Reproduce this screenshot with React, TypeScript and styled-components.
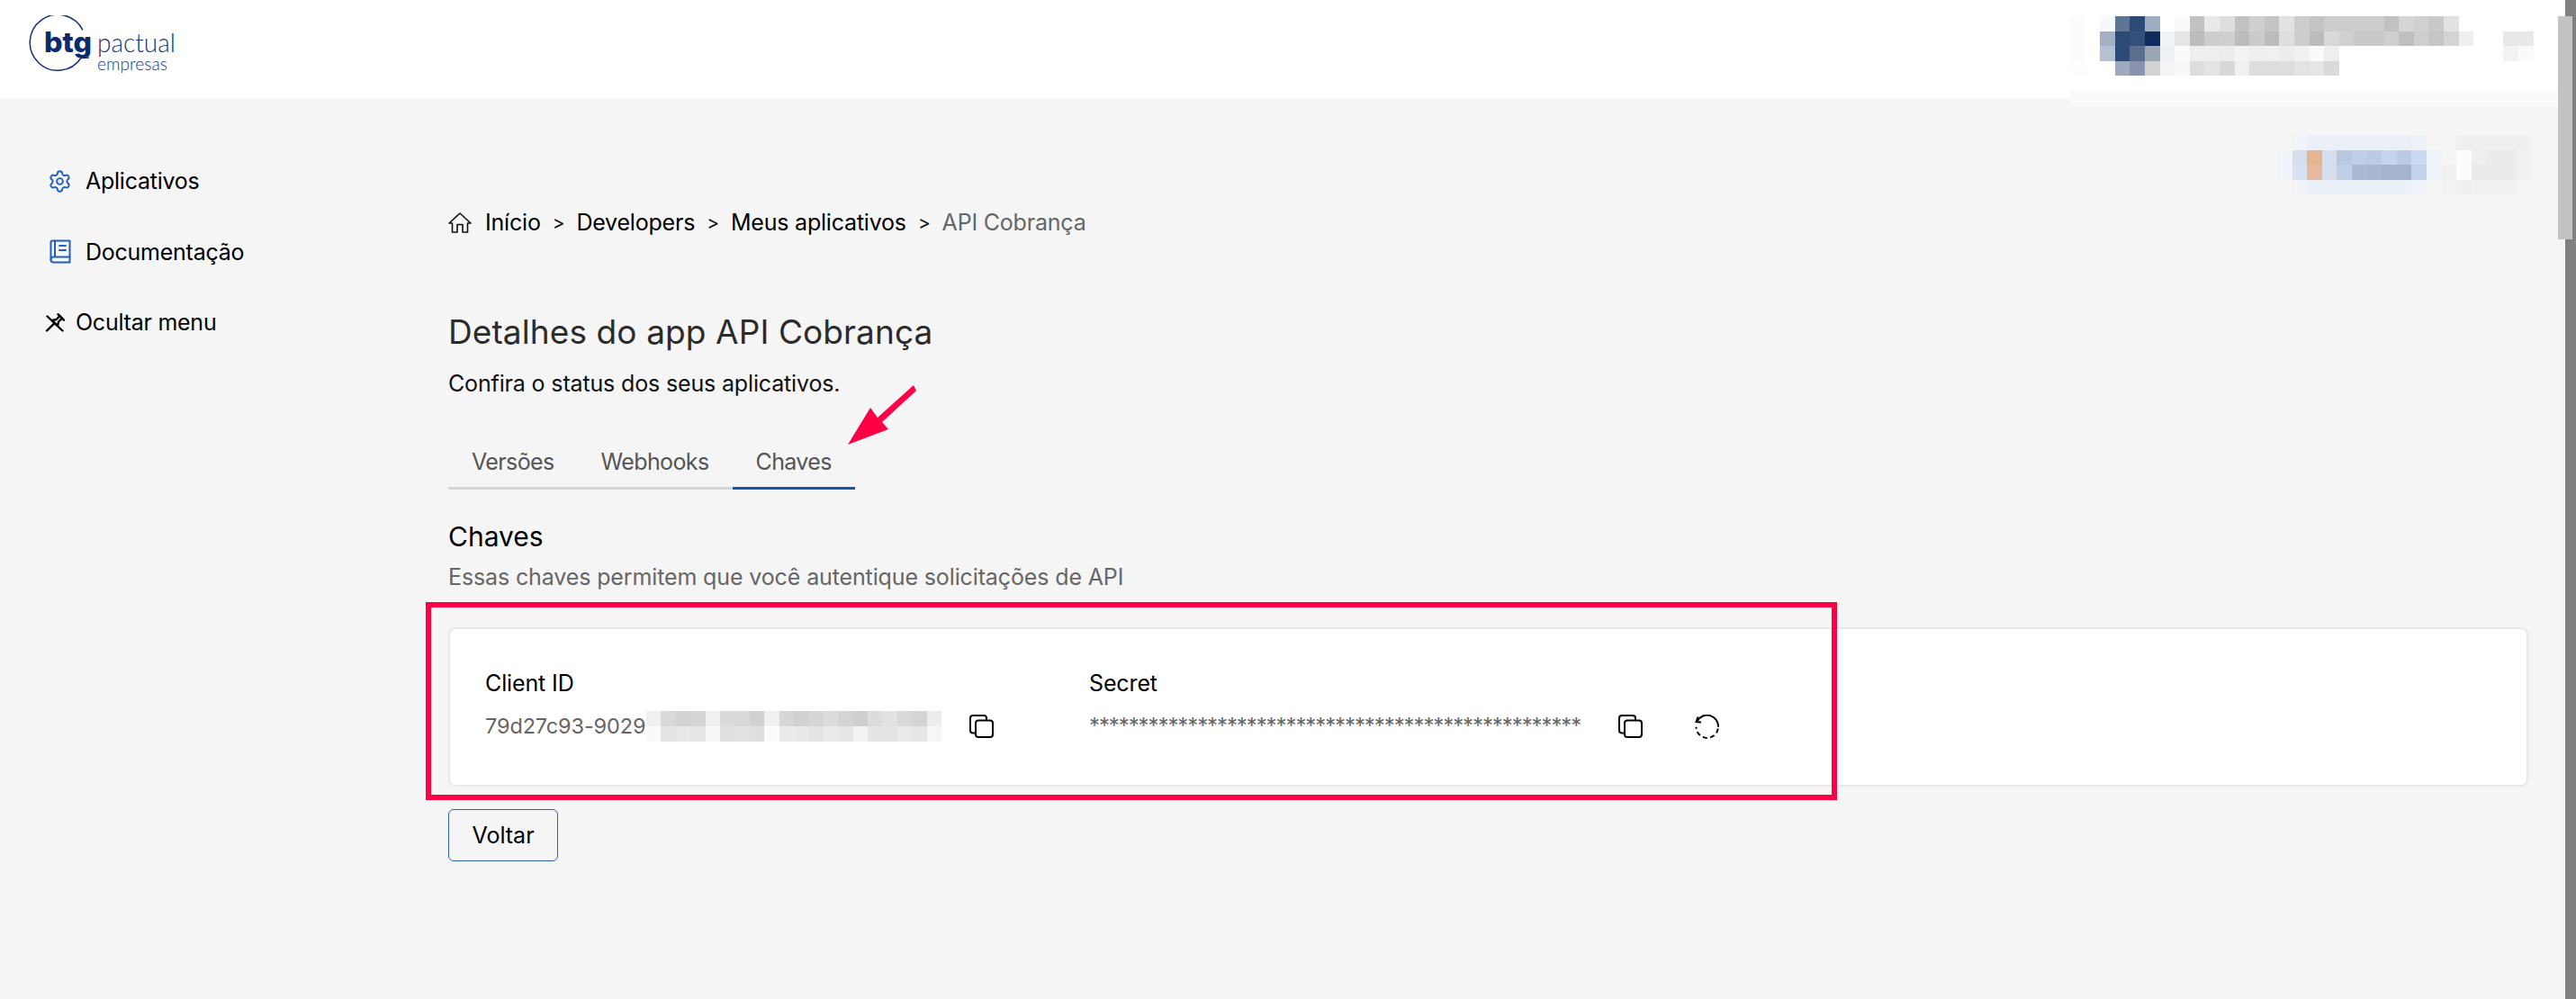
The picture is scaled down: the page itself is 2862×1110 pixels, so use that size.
import React from "react";
import styled, { createGlobalStyle } from "styled-components";
import { Settings } from "lucide-react";

const USER_ROWS = [
    ["#fcfcfc", "#fff", "#f6f8fa", "#5f7594", "#2c4a75", "#9dacc1", "#fff", "#fafafa", "#c2c2c2", "#e9e9e9", "#dedede", "#c2c2c2", "#cfcfcf", "#c4c4c4", "#e2e2e2", "#cdcdcd", "#c4c4c4", "#cdcdcd", "#cdcdcd", "#cdcdcd", "#cdcdcd", "#c2c2c2", "#d6d6d6", "#d0d0d0", "#c9c9c9", "#e2e2e2"],
    ["#fcfcfc", "#fff", "#a3afc2", "#2c4a75", "#34507a", "#0e2b5c", "#f0f2f6", "#e5e5e5", "#bcbcbc", "#cdcdcd", "#cfcfcf", "#bcbcbc", "#cbcbcb", "#bcbcbc", "#dedede", "#cdcdcd", "#bcbcbc", "#d9d9d9", "#d0d0d0", "#c9c9c9", "#c9c9c9", "#cfcfcf", "#bfbfbf", "#cecece", "#c6c6c6", "#d4d4d4", "#efefef", "#fff", "#fff", "#e8e8e8", "#e8e8e8"],
    ["#fcfcfc", "#fff", "#b5c0d0", "#2c4a75", "#5a6f8e", "#9ca5b3", "#eff1f4", "#fafafa", "#eeeeee", "#eeeeee", "#ececec", "#f3f3f3", "#eeeeee", "#f0f0f0", "#ececec", "#f1f1f1", "#fafafa", "#eeeeee", "#fff", "#fff", "#fff", "#fff", "#fff", "#fff", "#fff", "#fff", "#fff", "#fff", "#fff", "#f3f3f3", "#fafafa"],
    ["#fdfdfd", "#fff", "#fff", "#9daabe", "#8894ad", "#d3d3d3", "#f5f5f5", "#f8f8f8", "#dddddd", "#e4e4e4", "#d8d8d8", "#f0f0f0", "#dddddd", "#dddddd", "#dddddd", "#e3e3e3", "#e5e5e5", "#dadada"],
];

const ACCOUNT_ROWS = [
    ["#f5f5f5", "#f0f3f9", "#ebeff8", "#ebeff8", "#ebeff8", "#ebeff8", "#ebeff8", "#ebeff8", "#ebeff8", "#eef2f8", "#f5f5f5", "#f4f4f4", "#efefef", "#efefef", "#efefef", "#efefef", "#efefef"],
    ["#f1f3fa", "#d6deee", "#e4b592", "#d6deee", "#b7c8df", "#bfcfe7", "#bbcbe3", "#c6d5ee", "#bbcbe3", "#c9daf2", "#eff3f8", "#f5f5f5", "#fcfcfc", "#eeeeee", "#ebebeb", "#ebebeb", "#f0f0f0"],
    ["#f1f3fa", "#d6e0f0", "#e3b9a0", "#d6deee", "#bfcfe7", "#aabad3", "#a8b8d0", "#a4b4cc", "#a4b4cc", "#c2d2ea", "#eff3f8", "#f0f0f0", "#fcfcfc", "#ebebeb", "#ebebeb", "#ebebeb", "#f0f0f0"],
    ["#f5f5f5", "#f2f3f8", "#e9f0f8", "#e9f0f8", "#e9f0f8", "#e9f0f8", "#e9f0f8", "#e9f0f8", "#e9f0f8", "#f0f3f8", "#f5f5f5", "#f3f3f3", "#efefef", "#f1f1f1", "#f1f1f1", "#f1f1f1", "#f4f4f4"],
];

const CLIENT_ID_ROWS = [
    ["#f0f0f0", "#d9d9d9", "#d2d2d2", "#d6d6d6", "#f0f0f0", "#dadada", "#d9d9d9", "#d1d1d1", "#f0f0f0", "#d6d6d6", "#d1d1d1", "#d6d6d6", "#dcdcdc", "#d4d4d4", "#cfcfcf", "#dcdcdc", "#e2e2e2", "#d9d9d9", "#d4d4d4", "#ececec"],
    ["#fafafa", "#e3e3e3", "#e8e8e8", "#e6e6e6", "#f8f8f8", "#e0e0e0", "#e2e2e2", "#dedede", "#fcfcfc", "#ebebeb", "#e8e8e8", "#e4e4e4", "#ebebeb", "#e6e6e6", "#f2f2f2", "#e4e4e4", "#e4e4e4", "#ebebeb", "#e6e6e6", "#f6f6f6"],
];

// blurred-out pieces of the screenshot
const Mosaic: React.FC<{ rows: string[][]; cellW: number; cellH: number }> = ({ rows, cellW, cellH }) => {
    const cols = Math.max(...rows.map((row) => row.length));
    return (
        <svg width={cols * cellW} height={rows.length * cellH} shapeRendering="crispEdges" style={{ display: "block", flexShrink: 0 }}>
            {rows.map((row, y) =>
                row.map((color, x) => (
                    <rect key={`${x}-${y}`} x={x * cellW} y={y * cellH} width={cellW + 0.5} height={cellH + 0.5} fill={color} />
                ))
            )}
        </svg>
    );
};

const Logo = () => (
    <svg width="180" height="70" viewBox="0 0 180 70" style={{ display: "block" }}>
        <path d="M61 16.5 A 31 31 0 1 0 59 47.5 L 68 47" fill="none" stroke="#15307a" strokeWidth="1.5" />
        <text x="18" y="41" fontFamily="Inter, sans-serif" fontWeight="800" fontSize="31" fill="#0e2a6e" textLength="53" lengthAdjust="spacingAndGlyphs">btg</text>
        <text x="77" y="41" fontFamily="Lato, sans-serif" fontWeight="300" fontSize="29" fill="#1c3778" textLength="87" lengthAdjust="spacingAndGlyphs">pactual</text>
        <text x="77" y="61" fontFamily="Lato, sans-serif" fontWeight="300" fontSize="19" fill="#1c3778" textLength="78" lengthAdjust="spacingAndGlyphs">empresas</text>
    </svg>
);

const BookIcon = () => (
    <svg width="24" height="27" viewBox="0 0 24 27" fill="none" stroke="#1f5fbf" strokeWidth="2" strokeLinejoin="round" strokeLinecap="round">
        <path d="M3 1.5H22.5V25.5H4.5A3 3 0 0 1 1.5 22.5V3A1.5 1.5 0 0 1 3 1.5Z" />
        <path d="M6 1.5V19.5M1.5 22.5A3 3 0 0 1 4.5 19.5H22.5" />
        <path d="M11 7H18M11 12H18" />
    </svg>
);

const PinOffIcon = () => (
    <svg width="22" height="21" viewBox="0 0 22 21" fill="none" stroke="#000" strokeWidth="2.4" strokeLinejoin="round" strokeLinecap="round">
        <path d="M14.5 1.2L21 7.7" />
        <path d="M16.5 3.2L12.5 7L8 8L14 14L15 9.5L19 5.7" />
        <path d="M10.5 11.2L2 19.5" />
        <path d="M2.5 3.5L19.5 19.5" />
    </svg>
);

const HomeIcon = () => (
    <svg width="26" height="23" viewBox="0 0 26 23" fill="none" stroke="#111" strokeWidth="1.6" strokeLinejoin="round">
        <path d="M1 12L13 1L25 12H21.5V22H16V13.5H10V22H4.5V12Z" />
    </svg>
);

const CopyIcon = () => (
    <svg width="27" height="26" viewBox="0 0 27 26" fill="none" stroke="#000" strokeWidth="2">
        <rect x="7" y="6.5" width="19" height="18.5" rx="3" />
        <path d="M7 20.5H4A3 3 0 0 1 1 17.5V4A3 3 0 0 1 4 1H16A3 3 0 0 1 19 4V6.5" />
    </svg>
);

const ResetIcon = () => (
    <svg width="28" height="27" viewBox="0 0 28 27" fill="none" stroke="#000" strokeWidth="2">
        <path d="M3 7A12.2 12.2 0 0 1 25.9 13.7" />
        <path d="M25.9 13.7A12.2 12.2 0 0 1 1.5 13.7" strokeDasharray="5 3.5" strokeDashoffset="-2" />
        <path d="M3.5 2.5L1.5 8L7 8.5" />
    </svg>
);

const Arrow = () => (
    <ArrowSvg width="80" height="70" viewBox="0 0 80 70">
        <polygon points="1,67 26,26 34,37 74,1 77,7 39,42 46,50" fill="#fe0045" />
    </ArrowSvg>
);

const App: React.FC = () => {
    return (
        <Page>
            <GlobalStyle />
            <Header>
                <Logo />
            </Header>

            <Body>
                <Sidebar>
                    <NavItem>
                        <NavIcon><Settings size={27} color="#1f5fbf" strokeWidth={1.7} /></NavIcon>
                        Aplicativos
                    </NavItem>
                    <NavItem>
                        <NavIcon><BookIcon /></NavIcon>
                        Documentação
                    </NavItem>
                    <NavItem $tight>
                        <PinOffIcon />
                        Ocultar menu
                    </NavItem>
                </Sidebar>

                <Main>
                    <AccountRow>
                        <Mosaic rows={ACCOUNT_ROWS} cellW={16.6} cellH={16.5} />
                    </AccountRow>

                    <Breadcrumb>
                        <HomeIcon />
                        <Crumb>Início</Crumb>
                        <Separator>&gt;</Separator>
                        <Crumb>Developers</Crumb>
                        <Separator>&gt;</Separator>
                        <Crumb>Meus aplicativos</Crumb>
                        <Separator>&gt;</Separator>
                        <Crumb $current>API Cobrança</Crumb>
                    </Breadcrumb>

                    <Title>Detalhes do app API Cobrança</Title>
                    <Subtitle>Confira o status dos seus aplicativos.</Subtitle>

                    <Tabs>
                        <Tab>Versões</Tab>
                        <Tab>Webhooks</Tab>
                        <Tab $active>Chaves</Tab>
                    </Tabs>

                    <SectionTitle>Chaves</SectionTitle>
                    <SectionText>Essas chaves permitem que você autentique solicitações de API</SectionText>

                    <Card>
                        <Field>
                            <FieldLabel>Client ID</FieldLabel>
                            <ClientIdRow>
                                <FieldValue>79d27c93-9029</FieldValue>
                                <Mosaic rows={CLIENT_ID_ROWS} cellW={16.4} cellH={17} />
                                <IconButton><CopyIcon /></IconButton>
                            </ClientIdRow>
                        </Field>
                        <Field>
                            <FieldLabel>Secret</FieldLabel>
                            <SecretRow>
                                <SecretValue>**************************************************</SecretValue>
                                <IconButton><CopyIcon /></IconButton>
                                <IconButton><ResetIcon /></IconButton>
                            </SecretRow>
                        </Field>
                    </Card>

                    <BackButton>Voltar</BackButton>
                </Main>
            </Body>

            <UserBlock>
                <Mosaic rows={USER_ROWS} cellW={16.6} cellH={16.5} />
                <UserFade />
            </UserBlock>

            <Highlight />
            <Arrow />

            <ScrollTrack>
                <ScrollThumb />
            </ScrollTrack>
        </Page>
    );
};

export default App;

const GlobalStyle = createGlobalStyle`
    html, body {
        margin: 0;
        padding: 0;
        background: #f5f5f5;
        overflow: hidden;
    }
    * {
        box-sizing: border-box;
    }
`;

const Page = styled.div`
    position: relative;
    width: 2862px;
    height: 1110px;
    overflow: hidden;
    background: #f5f5f5;
    font-family: Inter, "Liberation Sans", sans-serif;
    color: #000;
`;

const Header = styled.header`
    height: 110px;
    background: #fff;
    display: flex;
    align-items: flex-start;
    padding: 17px 0 0 31px;
`;

const Body = styled.div`
    display: flex;
`;

const Sidebar = styled.nav`
    width: 498px;
    flex-shrink: 0;
    display: flex;
    flex-direction: column;
    gap: 48.5px;
    padding-top: 76px;
`;

const NavItem = styled.div<{ $tight?: boolean }>`
    display: flex;
    align-items: center;
    height: 30px;
    font-size: 25px;
    letter-spacing: -0.01em;
    gap: ${(props) => (props.$tight ? "12px" : "15px")};
    padding-left: ${(props) => (props.$tight ? "50px" : "53px")};
`;

const NavIcon = styled.span`
    display: flex;
    justify-content: center;
    width: 27px;
`;

const Main = styled.main`
    flex: 1;
    min-width: 0;
    padding: 40px 53px 0 0;
    display: flex;
    flex-direction: column;
    align-items: flex-start;
`;

const AccountRow = styled.div`
    align-self: stretch;
    display: flex;
    justify-content: flex-end;
    margin-right: -3px;
`;

const Breadcrumb = styled.div`
    display: flex;
    align-items: center;
    gap: 13px;
    height: 30px;
    margin-top: 16px;
    font-size: 25px;
    letter-spacing: -0.008em;
`;

const Crumb = styled.span<{ $current?: boolean }>`
    color: ${(props) => (props.$current ? "#666" : "#000")};
    &:first-of-type {
        margin-left: 2px;
    }
`;

const Separator = styled.span`
    font-size: 21px;
    color: #111;
`;

const Title = styled.h1`
    margin: 84px 0 0;
    font-size: 37px;
    line-height: 46px;
    font-weight: 400;
    letter-spacing: 0.1px;
    color: #2b2b2b;
`;

const Subtitle = styled.p`
    margin: 19px 0 0;
    font-size: 25px;
    line-height: 30px;
    letter-spacing: -0.006em;
    color: #111;
`;

const Tabs = styled.div`
    display: flex;
    margin-top: 57px;
    border-bottom: 3px solid #d6d6d6;
`;

const Tab = styled.div<{ $active?: boolean }>`
    padding: 0 26px 13px;
    margin-bottom: -3px;
    font-size: 25px;
    line-height: 30px;
    letter-spacing: -0.025em;
    color: #555;
    border-bottom: 3px solid ${(props) => (props.$active ? "#1a56b0" : "transparent")};
`;

const SectionTitle = styled.h2`
    margin: 34px 0 0;
    font-size: 30px;
    line-height: 36px;
    font-weight: 400;
`;

const SectionText = styled.p`
    margin: 12px 0 0;
    font-size: 25px;
    line-height: 30px;
    letter-spacing: -0.005em;
    color: #666;
`;

const Card = styled.section`
    align-self: stretch;
    height: 177px;
    margin-top: 41px;
    padding: 45px 0 0 39px;
    display: grid;
    grid-template-columns: 671px auto;
    justify-content: start;
    background: #fff;
    border: 2px solid #e8e8e8;
    border-radius: 8px;
`;

const Field = styled.div`
    display: flex;
    flex-direction: column;
    gap: 16px;
`;

const FieldLabel = styled.div`
    font-size: 25px;
    line-height: 30px;
    letter-spacing: -0.005em;
`;

const ClientIdRow = styled.div`
    display: flex;
    align-items: center;
    height: 34px;
    gap: 2px;
    & > button {
        margin-left: 29px;
    }
`;

const SecretRow = styled.div`
    display: flex;
    align-items: center;
    height: 34px;
    & > button {
        margin-left: 43px;
    }
    & > button + button {
        margin-left: 58px;
    }
`;

const FieldValue = styled.span`
    font-size: 23.5px;
    line-height: 34px;
    letter-spacing: -0.13px;
    color: #666;
    width: 177px;
    white-space: nowrap;
`;

const SecretValue = styled.span`
    font-size: 24px;
    line-height: 34px;
    letter-spacing: -1.1px;
    color: #666;
    width: 545px;
    white-space: nowrap;
`;

const IconButton = styled.button`
    display: flex;
    padding: 0;
    border: 0;
    background: none;
`;

const BackButton = styled.button`
    width: 122px;
    height: 58px;
    margin-top: 25px;
    padding: 0;
    background: transparent;
    border: 1.5px solid #2a62b8;
    border-radius: 6px;
    font-family: inherit;
    font-size: 25px;
    color: #000;
`;

const UserBlock = styled.div`
    position: absolute;
    top: 0;
    right: 12px;
    width: 550px;
    height: 118px;
    padding-top: 18px;
    background: #fff;
`;

const UserFade = styled.div`
    position: absolute;
    left: 0;
    right: 0;
    bottom: 0;
    height: 18px;
    background: #fafafa;
`;

const Highlight = styled.div`
    position: absolute;
    left: 473px;
    top: 669px;
    width: 1568px;
    height: 220px;
    border: 6px solid #fe0045;
    pointer-events: none;
`;

const ArrowSvg = styled.svg`
    position: absolute;
    left: 941px;
    top: 427px;
`;

const ScrollTrack = styled.div`
    position: absolute;
    top: 0;
    right: 0;
    width: 12px;
    height: 100%;
    background: #808080;
`;

const ScrollThumb = styled.div`
    position: absolute;
    top: 18px;
    left: -8px;
    width: 16px;
    height: 248px;
    background: #c2c2c2;
`;
